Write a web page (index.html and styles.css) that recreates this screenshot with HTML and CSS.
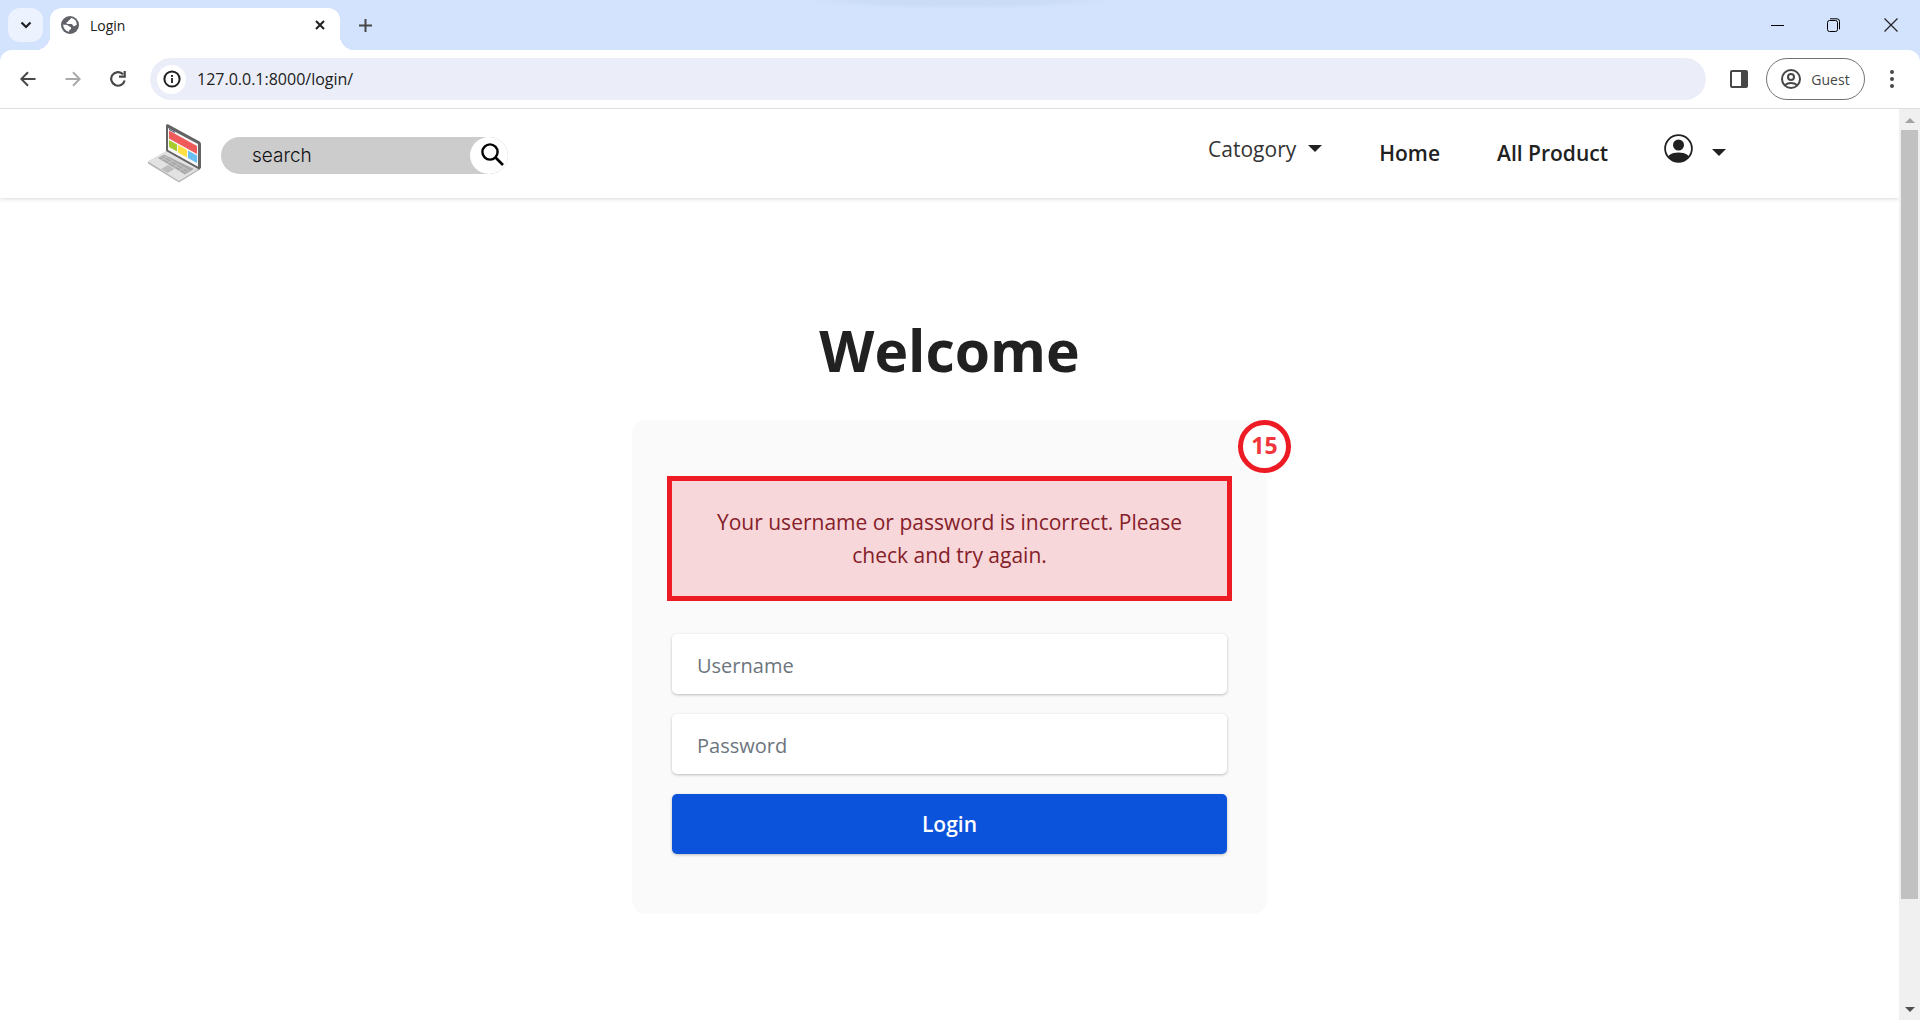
FILE: index.html
```html
<!DOCTYPE html>
<html lang="en">
<head>
<meta charset="utf-8">
<title>Login</title>
<link rel="stylesheet" href="styles.css">
</head>
<body>
<div class="tabstrip">
  <button class="tab-search" aria-label="Search tabs"><svg width="12" height="8" viewBox="0 0 12 8"><path d="M1.5 1.5 6 6l4.500-4.500" fill="none" stroke="#1f1f1f" stroke-width="2.200"/></svg></button>
  <div class="tab">
    <svg width="18" height="18" viewBox="0 0 18 18"><circle cx="9" cy="9" r="9" fill="#5f6368"/><path d="M10.500 2C9 2.200 9.500 4 8 4.300 7 4.600 7.500 6 6 6.200c-1 .2-.5 1.800.5 1.800h4c1.300 0 .8 2.200 2.500 2.200 1.400 0 1.200-1.200 2.800-1.200A7 7 0 0 0 10.500 2ZM2.200 8.500c1.600.2 3.800.3 4.800 1 1.200.8 1.700 1.500 3 1.700v2c-1.500.1-1.800.6-1.900 2.600A7 7 0 0 1 2.200 8.500Z" fill="#fff"/></svg>
    <span class="tab-title">Login</span>
    <button class="plain" aria-label="Close tab"><svg width="10" height="10" viewBox="0 0 10 10"><path d="m1 1 8 8M9 1 1 9" stroke="#1f1f1f" stroke-width="2"/></svg></button>
  </div>
  <button class="plain new-tab" aria-label="New tab"><svg width="13" height="13" viewBox="0 0 13 13"><path d="M6.500 0v13M0 6.500h13" stroke="#474747" stroke-width="2"/></svg></button>
  <div class="top-shade"></div>
  <div class="window-controls">
    <button class="plain" aria-label="Minimize"><svg width="14" height="14" viewBox="0 0 14 14"><path d="M1 7.500h13" stroke="#000"/></svg></button>
    <button class="plain" aria-label="Restore"><svg width="14" height="14" viewBox="0 0 14 14"><rect x=".5" y="2.500" width="10" height="11" rx="2" fill="none" stroke="#000"/><path d="M3 .8h7a2.500 2.500 0 0 1 2.500 2.500v8" fill="none" stroke="#000"/></svg></button>
    <button class="plain" aria-label="Close"><svg width="14" height="14" viewBox="0 0 14 14"><path d="m.5.5 13 13m0-13-13 13" stroke="#222" stroke-width="1.200"/></svg></button>
  </div>
</div>

<div class="toolbar">
  <div class="nav-buttons">
    <button class="plain" aria-label="Back"><svg width="16" height="16" viewBox="0 0 16 16"><path d="M15.500 8H2M8 1.300 1.300 8 8 14.700" fill="none" stroke="#474747" stroke-width="2"/></svg></button>
    <button class="plain" aria-label="Forward"><svg width="16" height="16" viewBox="0 0 16 16"><path d="M.5 8H14M8 1.300 14.700 8 8 14.700" fill="none" stroke="#a9a9a9" stroke-width="2"/></svg></button>
    <button class="plain" aria-label="Reload"><svg width="16" height="16" viewBox="0 0 16 16"><path d="M14.600 9.500A6.800 6.800 0 1 1 13 3.300" fill="none" stroke="#474747" stroke-width="2.200"/><path d="M15.800 0v6.800H9V4.600h4.600V0Z" fill="#474747"/></svg></button>
  </div>
  <div class="address">
    <span class="site-info"><svg width="18" height="18" viewBox="0 0 18 18"><circle cx="9" cy="9" r="7.600" fill="none" stroke="#1f1f1f" stroke-width="2"/><path d="M9 8v5M9 5v2" stroke="#1f1f1f" stroke-width="1.800"/></svg></span>
    <input class="url" type="text" aria-label="Address" value="127.0.0.1:8000/login/">
  </div>
  <button class="plain panel" aria-label="Side panel"><svg width="18" height="18" viewBox="0 0 18 18"><rect x="1" y="1" width="16" height="16" rx="1" fill="none" stroke="#474747" stroke-width="2"/><path d="M11 1h6v16h-6z" fill="#474747"/></svg></button>
  <button class="guest"><svg width="20" height="20" viewBox="0 0 20 20"><g fill="none" stroke="#474747" stroke-width="2"><circle cx="10" cy="10" r="9"/><circle cx="10" cy="8" r="3"/><path d="M3.800 16.300c3.500-3 8.900-3 12.400 0"/></g></svg>Guest</button>
  <button class="plain" aria-label="Menu"><svg width="4" height="18" viewBox="0 0 4 18"><g fill="#474747"><circle cx="2" cy="2" r="2"/><circle cx="2" cy="9" r="2"/><circle cx="2" cy="16" r="2"/></g></svg></button>
</div>

<div class="viewport">
  <div class="page">
    <header class="site-header">
      <a href="#" class="logo" aria-label="Shop"><svg width="54" height="60" viewBox="0 0 54 60">
        <path d="M18 28 0 37.500v2L31 58.500l21-13v-2Z" fill="#b5b5b5"/>
        <path d="M18 27 0 37.500 31 57l21-13Z" fill="#e2e2e2"/>
        <path d="M16 30.500 10 34l27 16.500 9-5.500Z" fill="#a8a8a8"/>
        <path d="m12.500 32.500 27 16.500M15 31l27 16.500M19 33l-6 3.500M25 36.500l-6 3.500M31 40l-6 4M37 43.500 31 47" stroke="#c9c9c9" stroke-width=".8"/>
        <path d="m20 41-7 4 6.500 4 7-4Z" fill="#bdbdbd"/>
        <path d="M18 1.500Q18 0 20 .3l32 17.500 1 2V44l-2 1.500L18 27Z" fill="#636363"/>
        <path d="M20 4v22l30 16.800V20Z" fill="#f8f8f8"/>
        <path d="m21 4.500 6 3.300v1.400l-6-3.300Z" fill="#6f7590"/>
        <path d="M21 6.500 49 22v8L21 14.500Z" fill="#ef5a5a"/>
        <path d="m21 16 8 4.500v7L21 23Z" fill="#a8cb32"/>
        <path d="m30 21 9 5v7.500l-9-5Z" fill="#ffe143"/>
        <path d="m40 26.500 9 5V39l-9-5Z" fill="#67bff2"/>
      </svg></a>
      <form class="search">
        <input type="text" placeholder="search" aria-label="search">
        <button type="button" aria-label="Submit search"><svg width="24" height="24" viewBox="0 0 24 24"><circle cx="9" cy="9" r="7.600" fill="none" stroke="#000" stroke-width="2.400"/><path d="m14.500 14.500 7.500 7.500" stroke="#000" stroke-width="2.600"/></svg></button>
      </form>
      <nav class="menu">
        <button class="plain category">Catogory<span class="caret"></span></button>
        <a href="#" class="home">Home</a>
        <a href="#" class="products">All Product</a>
        <button class="plain account" aria-label="Account"><svg width="29" height="29" viewBox="0 0 29 29"><defs><clipPath id="disc"><circle cx="14.500" cy="14.500" r="13.500"/></clipPath></defs><circle cx="14.500" cy="14.500" r="13.400" fill="none" stroke="#212121" stroke-width="1.800"/><circle cx="14.500" cy="11" r="5.500" fill="#212121"/><path d="M2 29c0-7 5-10.500 12.500-10.500S27 22 27 29Z" fill="#212121" clip-path="url(#disc)"/></svg><span class="caret"></span></button>
      </nav>
    </header>
    <main>
      <h1>Welcome</h1>
      <form class="card">
        <span class="marker">15</span>
        <p class="alert" role="alert">Your username or password is incorrect. Please check and try again.</p>
        <input type="text" placeholder="Username" aria-label="Username">
        <input type="password" placeholder="Password" aria-label="Password">
        <button type="button">Login</button>
      </form>
    </main>
  </div>
  <div class="scrollbar">
    <span class="arrow up"></span>
    <span class="thumb"></span>
    <span class="arrow down"></span>
  </div>
</div>
</body>
</html>
```
FILE: styles.css
```css
* { box-sizing: border-box; }
body {
  margin: 0;
  height: 100vh;
  display: flex;
  flex-direction: column;
  background: #d3e3fd;
  color: #212121;
  font-family: "Open Sans", "Noto Sans", sans-serif;
}
button, input { font-family: inherit; border: 0; padding: 0; margin: 0; color: inherit; }
input { outline: 0; min-width: 0; }
svg { display: block; }
.plain { background: none; display: flex; align-items: center; }

/* Tab strip */
.tabstrip { height: 50px; flex: none; display: flex; align-items: center; padding: 0 22px 0 8px; position: relative; }
.tab-search { width: 35px; height: 34px; border-radius: 12px; background: #ecf2fe; display: grid; place-items: center; }
.tab {
  position: relative;
  align-self: flex-end;
  width: 290px;
  height: 42px;
  margin-left: 7px;
  padding: 0 15px 8px 11px;
  background: #fff;
  border-radius: 12px 12px 0 0;
  display: flex;
  align-items: center;
}
.tab::before, .tab::after { content: ""; position: absolute; bottom: 0; width: 14px; height: 14px; }
.tab::before { right: 100%; background: radial-gradient(circle at 0 0, transparent 14px, #fff 14px); }
.tab::after { left: 100%; background: radial-gradient(circle at 100% 0, transparent 14px, #fff 14px); }
.tab-title { flex: 1; margin-left: 11px; font-size: 14px; }
.new-tab { margin-left: 19px; }
.top-shade { position: absolute; top: 0; left: 50%; width: 320px; height: 9px; margin-left: -160px; background: radial-gradient(ellipse at top, #cbdcf6 40%, #d3e3fd 70%); }
.window-controls { margin-left: auto; display: flex; gap: 43px; }

/* Toolbar */
.toolbar {
  height: 59px;
  flex: none;
  display: flex;
  align-items: center;
  padding: 0 26px 0 20px;
  background: #fff;
  border-bottom: 1px solid #dfdfdf;
  border-radius: 12px 12px 0 0;
}
.nav-buttons { display: flex; gap: 29px; }
.address { flex: 1; height: 42px; margin: 0 24px; padding-left: 7px; border-radius: 21px; background: #ebeef8; display: flex; align-items: center; }
.site-info { width: 29px; height: 29px; border-radius: 50%; background: #fff; display: grid; place-items: center; }
.url { flex: 1; margin-left: 11px; background: none; font-size: 16px; }
.guest { width: 99px; height: 42px; margin: 0 25px 0 18px; border: 1px solid #747474; border-radius: 21px; background: #fff; color: #474747; font-size: 14px; display: flex; align-items: center; justify-content: center; gap: 10px; }

/* Page area */
.viewport { flex: 1; min-height: 0; display: flex; background: #fff; }
.page { flex: 1; min-width: 0; overflow: hidden; }
.site-header { height: 89px; padding: 0 173px 0 148px; display: flex; align-items: center; box-shadow: 0 1px 4px rgba(0, 0, 0, .15); }
.search { width: 287px; height: 37px; margin: 4px 0 0 19px; border-radius: 19px; background: #ccc; display: flex; overflow: hidden; }
.search input { flex: 1; padding-left: 31px; background: none; font-family: Inter, sans-serif; font-size: 19px; font-weight: 300; }
.search input::placeholder { color: #111; opacity: 1; }
.search button { width: 38px; border-radius: 50%; background: #fff; display: grid; place-items: center; padding: 0 0 2px 7px; }
.menu { margin-left: auto; display: flex; align-items: center; padding-bottom: 2px; font-size: 21px; }
.menu a { color: inherit; text-decoration: none; font-weight: 600; }
.caret { border: 7px solid transparent; border-top-color: #212121; border-bottom: 0; }
.category { font-size: 21px; color: #333; gap: 12px; padding-bottom: 8px; }
.home { margin-left: 57px; }
.products { margin-left: 57px; }
.account { margin-left: 56px; gap: 19px; padding-bottom: 8px; }
.account .caret { margin-top: 7px; }

main { padding-top: 107px; display: flex; flex-direction: column; align-items: center; }
h1 { margin: 0; font-size: 57px; line-height: 90px; font-weight: 700; }
.card { position: relative; width: 635px; max-width: 100%; margin-top: 25px; padding: 56px 40px 60px; border-radius: 14px; background: #fafafa; display: flex; flex-direction: column; gap: 20px; }
.alert { margin: 0 -5px 13px; padding: 25px 32px 24px; border: 5px solid #ed1c24; background: #f8d7da; color: #842029; font-size: 21px; line-height: 33px; text-align: center; }
.card input, .card button { height: 60px; border-radius: 5px; font-size: 21px; box-shadow: 0 1px 3px rgba(0, 0, 0, .25); }
.card input { padding: 3px 25px 0; background: #fff; font-size: 20px; }
.card input::placeholder { color: #6c757d; opacity: 1; }
.card button { background: #0b53db; color: #fff; font-weight: 600; }
.marker { position: absolute; top: 0; right: -24px; width: 53px; height: 53px; padding-bottom: 3px; border: 5px solid #ed1c24; border-radius: 50%; background: #fff; color: #f0353c; font-size: 23px; line-height: 30px; font-weight: 700; display: grid; place-items: center; }

.scrollbar { width: 21px; padding: 9px 2px 8px; background: #f0f0f0; display: flex; flex-direction: column; align-items: center; }
.arrow { border: 5px solid transparent; }
.up { border-top: 0; border-bottom-color: #a3a3a3; }
.down { border-bottom: 0; border-top-color: #505050; margin-top: auto; }
.thumb { width: 17px; height: 86%; margin-top: 7px; background: #c1c1c1; }
```
